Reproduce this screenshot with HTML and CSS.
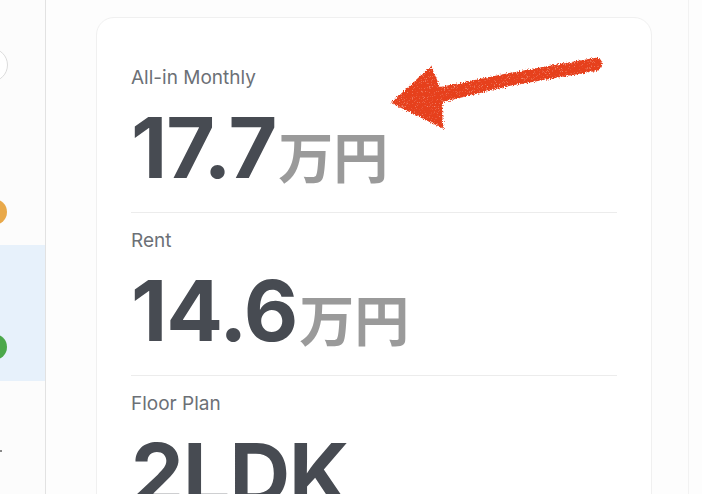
FILE: index.html
```html
<!DOCTYPE html>
<html lang="ja">
<head>
<meta charset="utf-8">
<title>Listing</title>
<link rel="stylesheet" href="styles.css">
</head>
<body>
<div class="app">
  <aside class="sidebar">
    <div class="side-item side-top"><span class="dot dot-outline"></span></div>
    <div class="side-item side-orange"><span class="dot dot-orange"></span></div>
    <div class="side-item side-active"><span class="dot dot-green"></span></div>
    <div class="side-item side-last"><span class="tick"></span></div>
  </aside>
  <main class="main">
    <section class="card">
      <div class="metric">
        <div class="label">All-in Monthly</div>
        <div class="value">17.7<span class="unit">万円</span></div>
      </div>
      <div class="metric">
        <div class="label">Rent</div>
        <div class="value">14.6<span class="unit">万円</span></div>
      </div>
      <div class="metric">
        <div class="label">Floor Plan</div>
        <div class="value">2LDK</div>
      </div>
      <svg class="arrow" width="230" height="90" viewBox="0 0 230 90" aria-hidden="true">
        <defs>
          <filter id="crayon" x="-10%" y="-20%" width="120%" height="140%">
            <feTurbulence type="fractalNoise" baseFrequency="0.85" numOctaves="2" seed="5" result="n"/>
            <feDisplacementMap in="SourceGraphic" in2="n" scale="5" xChannelSelector="R" yChannelSelector="G" result="d"/>
            <feTurbulence type="fractalNoise" baseFrequency="1.6" numOctaves="1" seed="9" result="g"/>
            <feColorMatrix in="g" type="matrix" values="0 0 0 0 0  0 0 0 0 0  0 0 0 0 0  0 0 0 -2.2 2.3" result="m"/>
            <feComposite in="d" in2="m" operator="in"/>
          </filter>
        </defs>
        <g fill="#e6401f" filter="url(#crayon)">
          <path d="M2 50 L42 13 Q47 24 51 34 L120 20 L205 5 Q212 4 213 10 Q214 16 207 18 L120 33 L54 49 Q52 62 55 76 Z"/>
        </g>
      </svg>
    </section>
  </main>
  <div class="rightpane"></div>
</div>
</body>
</html>
```

FILE: styles.css
```css
html, body {
  margin: 0;
  padding: 0;
  height: 100%;
  overflow: hidden;
  background: #fdfdfd;
}

body {
  font-family: Inter, "Noto Sans", "Noto Sans CJK JP", sans-serif;
}

.app {
  display: flex;
  height: 494px;
}

.sidebar {
  width: 45px;
  flex: none;
  border-right: 1px solid #e2e2e2;
  background: #fcfcfc;
  display: flex;
  flex-direction: column;
  overflow: hidden;
}

.side-item {
  display: flex;
  align-items: center;
}

.side-top {
  padding-top: 48px;
  height: 34px;
}

.side-orange {
  margin-top: 117px;
  height: 26px;
}

.side-active {
  margin-top: 20px;
  height: 136px;
  background: #e7f1fb;
  align-items: flex-start;
}

.side-last {
  margin-top: 68px;
  height: 4px;
}

.dot {
  display: block;
  flex: none;
  border-radius: 50%;
}

.dot-outline {
  width: 32px;
  height: 32px;
  margin-left: -26px;
  border: 1px solid #dcdcdc;
  background: #fff;
}

.dot-orange {
  width: 26px;
  height: 26px;
  margin-left: -19px;
  background: #e9a94a;
}

.dot-green {
  width: 26px;
  height: 26px;
  margin-left: -19px;
  margin-top: 89px;
  background: #4ba84a;
}

.tick {
  display: block;
  width: 2px;
  height: 2px;
  background: #888;
}

.main {
  flex: none;
  width: 642px;
  padding: 17px 36px 0 50px;
  box-sizing: border-box;
}

.card {
  position: relative;
  height: 520px;
  box-sizing: border-box;
  border: 1px solid #f0f0f0;
  border-radius: 18px;
  background: #fff;
  padding: 50px 34px 0;
}

.metric {
  padding-bottom: 22px;
}

.metric + .metric {
  border-top: 1px solid #ececec;
  padding-top: 18px;
}

.label {
  font-size: 19px;
  line-height: 19px;
  color: #6c7076;
  margin-bottom: 19px;
}

.value {
  font-size: 84px;
  line-height: 84px;
  height: 84px;
  font-weight: 700;
  color: #474b52;
  letter-spacing: -1px;
  white-space: nowrap;
}

.unit {
  font-family: "Noto Sans CJK JP", sans-serif;
  font-size: 55px;
  line-height: 1;
  font-weight: 700;
  color: #9a9a9a;
  letter-spacing: 0;
  margin-left: 2px;
}

.arrow {
  position: absolute;
  left: 292px;
  top: 35px;
}

.rightpane {
  flex: 1;
  border-left: 1px solid #f2f2f2;
  background: #fdfdfd;
}
```
